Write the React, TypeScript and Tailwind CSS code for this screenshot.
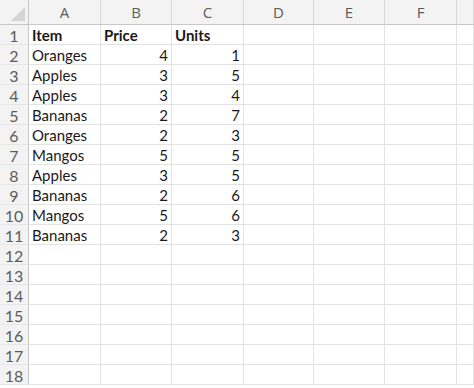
const cols = ["A", "B", "C", "D", "E", "F", ""];

const data: [string, number, number][] = [
  ["Oranges", 4, 1],
  ["Apples", 3, 5],
  ["Apples", 3, 4],
  ["Bananas", 2, 7],
  ["Oranges", 2, 3],
  ["Mangos", 5, 5],
  ["Apples", 3, 5],
  ["Bananas", 2, 6],
  ["Mangos", 5, 6],
  ["Bananas", 2, 3],
];

const gridCols = "grid grid-cols-[29px_72px_71px_72px_70px_71px_72px_1fr]";
const cell = "h-[20px] border-r border-b border-[#e3e3e3] px-[3px] leading-[21px] whitespace-nowrap overflow-hidden";

export default function App() {
  const rows: (string | number)[][] = [["Item", "Price", "Units"], ...data];
  for (let i = rows.length; i < 18; i++) rows.push([]);

  return (
    <div className="w-[474px] h-[388px] overflow-hidden bg-white text-[15px] text-[#1a1a1a] font-['Lato',sans-serif]">
      {/* column headers */}
      <div className={`${gridCols} h-[25px] bg-[#f3f3f3] border-b border-[#c8c8c8]`}>
        <div className="relative border-r border-[#c8c8c8]">
          <div className="absolute right-[3px] bottom-[3px] w-0 h-0 border-l-[14px] border-l-transparent border-b-[14px] border-b-[#d4d4d4]" />
        </div>
        {cols.map((c, i) => (
          <div
            key={i}
            className="flex items-center justify-center text-[#5c5c5c] text-[15px] font-['Open_Sans',sans-serif] border-r border-[#dadada]"
          >
            {c}
          </div>
        ))}
      </div>

      {/* rows */}
      {rows.map((r, i) => (
        <div key={i} className={gridCols}>
          <div className="h-[20px] bg-[#f3f3f3] border-r border-b border-[#c8c8c8] border-b-[#e6e6e6] text-[#5c5c5c] text-[16px] text-center leading-[21px]">
            {i + 1}
          </div>
          <div className={`${cell} ${i === 0 ? "font-bold" : ""}`}>{r[0] ?? ""}</div>
          <div className={`${cell} ${i === 0 ? "font-bold text-left" : "text-right"}`}>{r[1] ?? ""}</div>
          <div className={`${cell} ${i === 0 ? "font-bold text-left" : "text-right"}`}>{r[2] ?? ""}</div>
          <div className={cell} />
          <div className={cell} />
          <div className={cell} />
          <div className={cell} />
        </div>
      ))}
    </div>
  );
}
